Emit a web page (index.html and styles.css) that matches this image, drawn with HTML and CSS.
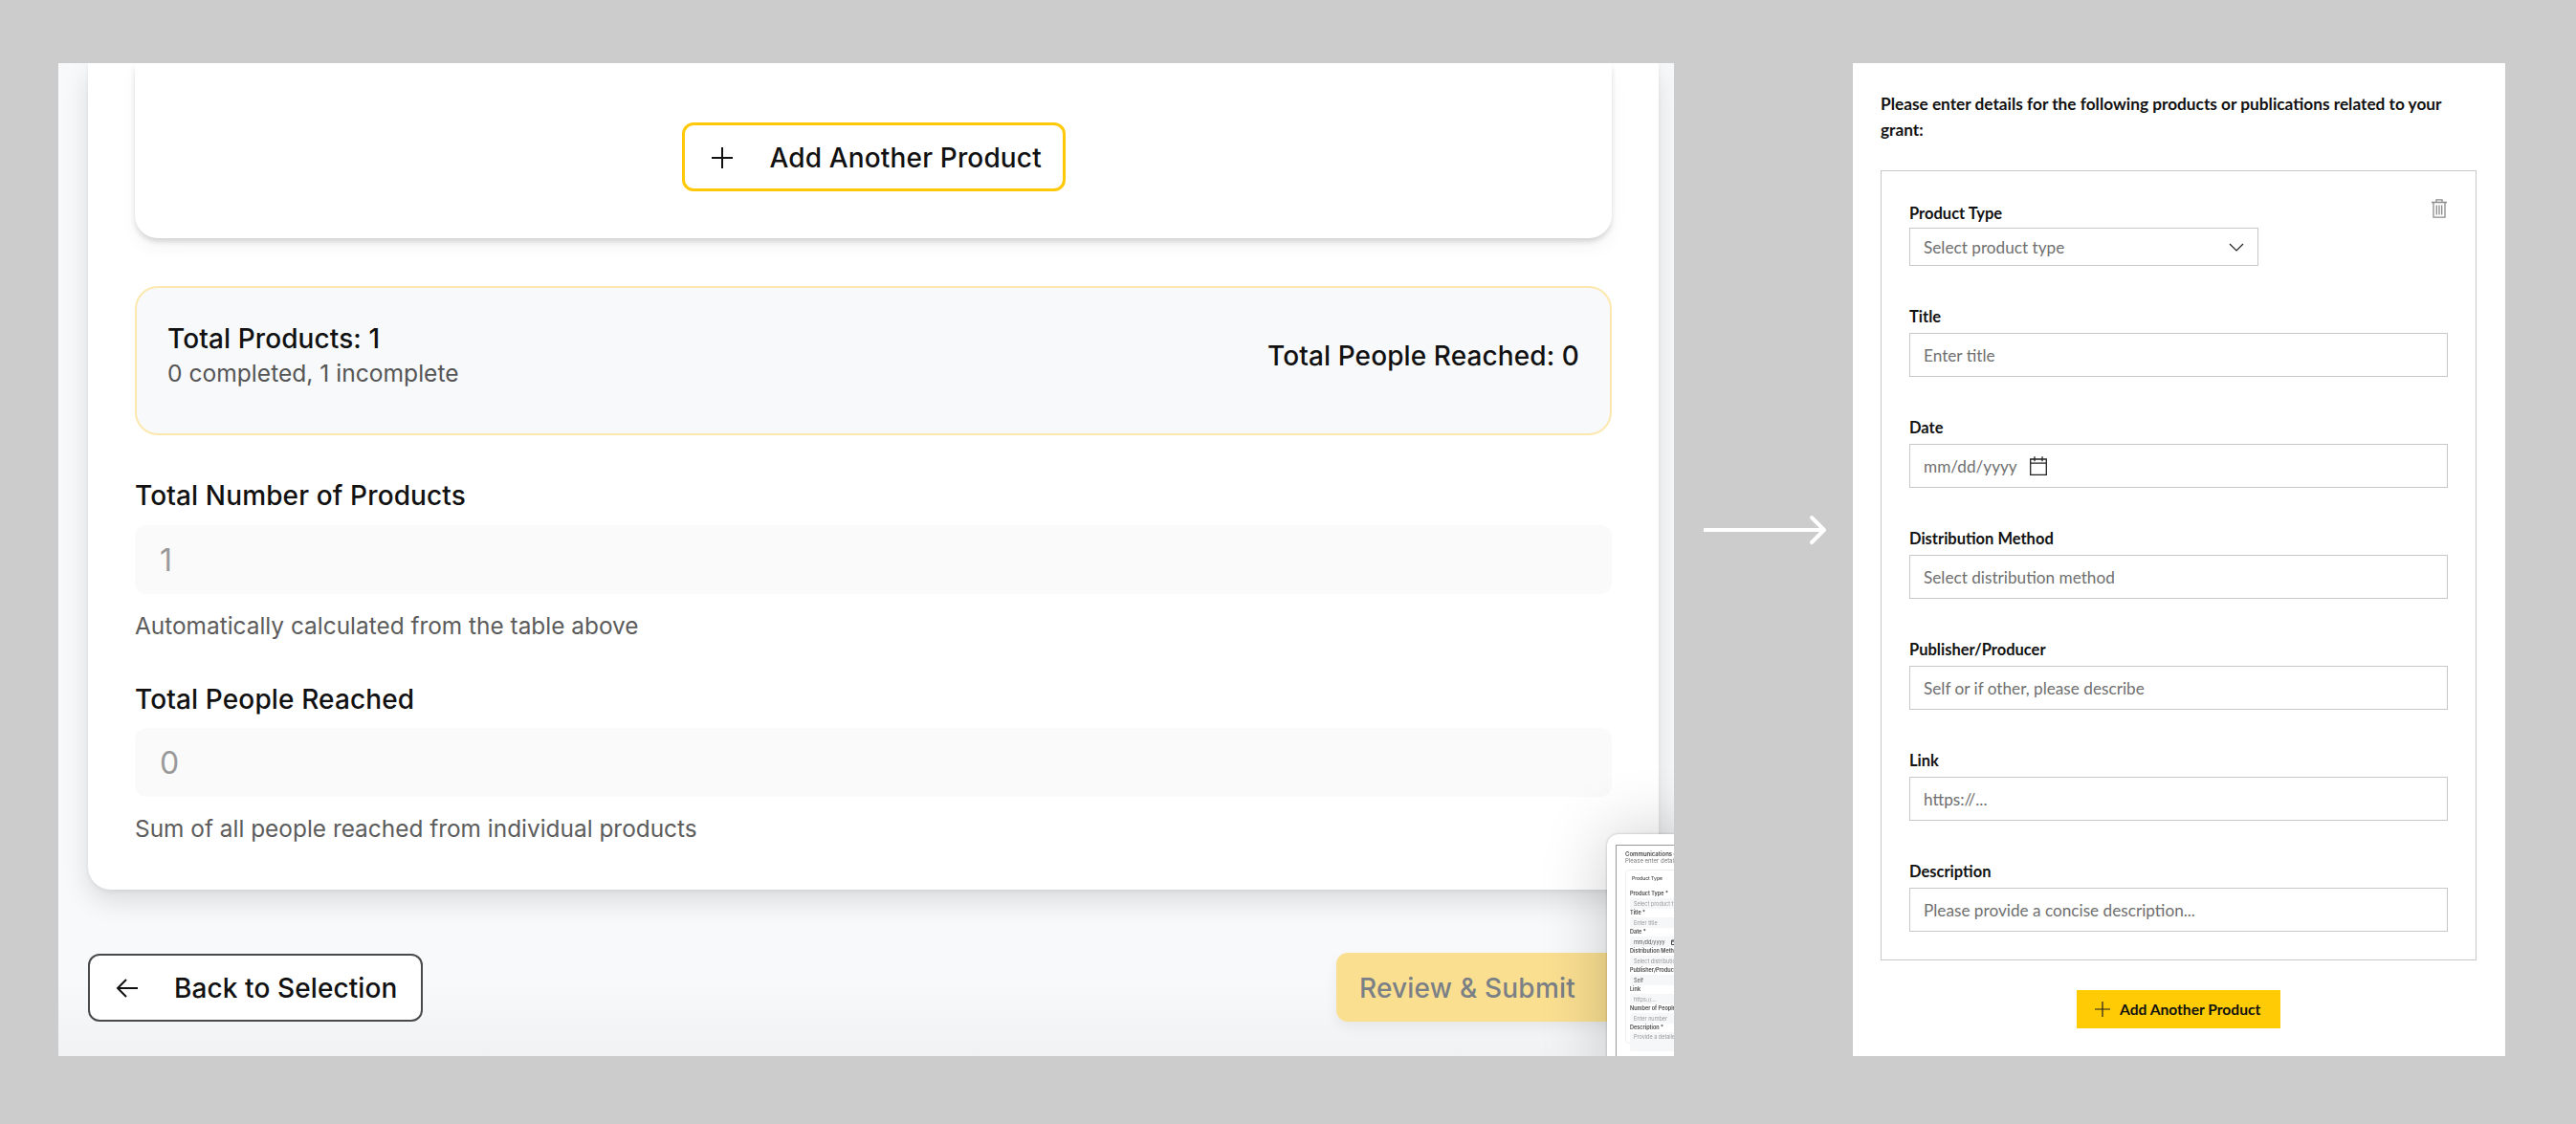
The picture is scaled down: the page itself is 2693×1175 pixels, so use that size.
FILE: index.html
```html
<!DOCTYPE html>
<html lang="en">
<head>
<meta charset="utf-8">
<title>Product form before and after</title>
<link rel="stylesheet" href="styles.css">
</head>
<body>
<main class="stage">
  <section class="before">
    <div class="main-card">
      <div class="products-card">
        <button class="add-outline">
          <svg class="ico-plus" viewBox="0 0 24 24" width="24" height="24"><path d="M12 1v22M1 12h22" fill="none" stroke="#111" stroke-width="2"/></svg>
          <span>Add Another Product</span>
        </button>
      </div>
      <div class="summary">
        <div>
          <div class="summary-title">Total Products: 1</div>
          <div class="summary-sub">0 completed, 1 incomplete</div>
        </div>
        <div class="summary-title">Total People Reached: 0</div>
      </div>
      <div class="calc first">
        <div class="calc-label">Total Number of Products</div>
        <div class="calc-input">1</div>
        <div class="calc-help">Automatically calculated from the table above</div>
      </div>
      <div class="calc second">
        <div class="calc-label">Total People Reached</div>
        <div class="calc-input">0</div>
        <div class="calc-help">Sum of all people reached from individual products</div>
      </div>
    </div>
    <div class="nav-row">
      <button class="back">
        <svg viewBox="0 0 24 24" width="24" height="24"><path d="M23 12H2M11 3l-9 9 9 9" fill="none" stroke="#111" stroke-width="2"/></svg>
        <span>Back to Selection</span>
      </button>
      <button class="submit">Review &amp; Submit</button>
    </div>
    <aside class="thumb">
      <div class="thumb-frame">
        <div class="thumb-title">Communications or Media Products</div>
        <div class="thumb-sub">Please enter details for the following products</div>
        <div class="thumb-card">
          <div class="thumb-tag">Product Type</div>
          <div class="thumb-field"><div class="thumb-label">Product Type *</div><div class="thumb-input">Select product type</div></div>
          <div class="thumb-field"><div class="thumb-label">Title *</div><div class="thumb-input">Enter title</div></div>
          <div class="thumb-field"><div class="thumb-label">Date *</div><div class="thumb-input dark">mm/dd/yyyy<svg class="thumb-cal" viewBox="0 0 6 6" width="6" height="6"><path d="M.5 1h5v4.5h-5zM.5 2h5" fill="none" stroke="#444"/></svg></div></div>
          <div class="thumb-field"><div class="thumb-label">Distribution Method</div><div class="thumb-input">Select distribution method</div></div>
          <div class="thumb-field"><div class="thumb-label">Publisher/Producer</div><div class="thumb-input dark">Self</div></div>
          <div class="thumb-field"><div class="thumb-label">Link</div><div class="thumb-input">https://...</div></div>
          <div class="thumb-field"><div class="thumb-label">Number of People Reached</div><div class="thumb-input">Enter number</div></div>
          <div class="thumb-field"><div class="thumb-label">Description *</div><div class="thumb-input tall">Provide a detailed description</div></div>
        </div>
      </div>
    </aside>
  </section>

  <div class="arrow">
    <svg viewBox="0 0 130 32" width="130" height="32"><path d="M0 16H126" fill="none" stroke="#fff" stroke-width="4"/><path d="M113 3l13 13-13 13" fill="none" stroke="#fff" stroke-width="4" stroke-linecap="round" stroke-linejoin="round"/></svg>
  </div>

  <section class="after">
    <p class="intro">Please enter details for the following products or publications related to your grant:</p>
    <div class="form-box">
      <svg class="trash" viewBox="0 0 16 20" width="16" height="20"><path d="M0 3.5h16M5 3V.8h6V3M2 3.5v15.7h12V3.5M5.3 6.5v10M8 6.5v10M10.7 6.5v10" fill="none" stroke="#8a8a8a" stroke-width="1.3"/></svg>
      <div class="field">
        <div class="label">Product Type</div>
        <div class="input select"><span>Select product type</span><svg viewBox="0 0 16 9" width="16" height="9"><path d="M1 1l7 7 7-7" fill="none" stroke="#222" stroke-width="1.2"/></svg></div>
      </div>
      <div class="field">
        <div class="label">Title</div>
        <div class="input"><span>Enter title</span></div>
      </div>
      <div class="field">
        <div class="label">Date</div>
        <div class="input"><span>mm/dd/yyyy</span><svg class="cal" viewBox="0 0 18 20" width="18" height="20"><path d="M.7 3h16.6v16.3H.7zM.7 7.2h16.6M5 .3v5M13 .3v5" fill="none" stroke="#222" stroke-width="1.3"/></svg></div>
      </div>
      <div class="field">
        <div class="label">Distribution Method</div>
        <div class="input"><span>Select distribution method</span></div>
      </div>
      <div class="field">
        <div class="label">Publisher/Producer</div>
        <div class="input"><span>Self or if other, please describe</span></div>
      </div>
      <div class="field">
        <div class="label">Link</div>
        <div class="input"><span>https://...</span></div>
      </div>
      <div class="field">
        <div class="label">Description</div>
        <div class="input"><span>Please provide a concise description...</span></div>
      </div>
    </div>
    <div class="add-row">
      <button class="add-solid">
        <svg viewBox="0 0 16 16" width="16" height="16"><path d="M8 0v16M0 8h16" fill="none" stroke="#222" stroke-width="1.2"/></svg>
        <span>Add Another Product</span>
      </button>
    </div>
  </section>
</main>
</body>
</html>
```

FILE: styles.css
```css
* { box-sizing: border-box; }
html, body { margin: 0; height: 100%; }
body { background: #cccccc; overflow: hidden; }
button { font: inherit; cursor: pointer; }

.stage {
  display: flex;
  align-items: flex-start;
  padding: 66px 0 0 61px;
  height: 1175px;
}

/* Before panel */
.before {
  position: relative;
  flex: none;
  width: 1689px;
  height: 1038px;
  padding-left: 31px;
  padding-right: 16px;
  overflow: hidden;
  font-family: Inter, "Liberation Sans", sans-serif;
  color: #111;
  background: linear-gradient(to bottom, #f8f9fb 0, #f8f9fb 92%, #f1f2f3 100%);
}
.main-card {
  background: #fff;
  height: 864px;
  padding: 0 49px;
  border-radius: 0 0 24px 24px;
  box-shadow: 0 12px 28px rgba(0, 0, 0, .12), 0 2px 4px rgba(0, 0, 0, .06);
}
.products-card {
  height: 183px;
  display: flex;
  justify-content: center;
  padding-top: 62px;
  background: #fff;
  border-radius: 0 0 24px 24px;
  box-shadow: 0 4px 6px -1px rgba(0, 0, 0, .17), 0 10px 20px rgba(0, 0, 0, .04);
}
.add-outline {
  width: 401px;
  height: 72px;
  display: flex;
  align-items: center;
  gap: 38px;
  padding: 1px 0 0 27px;
  background: #fff;
  border: 3px solid #ffc907;
  border-radius: 12px;
  font-size: 28px;
  font-weight: 500;
  letter-spacing: .15px;
  color: #111;
}
.summary {
  margin-top: 50px;
  height: 156px;
  display: flex;
  justify-content: space-between;
  align-items: center;
  padding: 0 32px 11px;
  background: #f8f9fb;
  border: 2px solid #fce8ae;
  border-radius: 24px;
}
.summary-title { font-size: 28px; font-weight: 500; line-height: 36px; letter-spacing: .1px; }
.summary-sub { font-size: 24.6px; line-height: 36px; color: #555; }
.calc.first { margin-top: 46px; }
.calc.second { margin-top: 43px; }
.calc-label { font-size: 28px; font-weight: 500; line-height: 34px; letter-spacing: .13px; }
.calc-input {
  margin-top: 14px;
  height: 72px;
  display: flex;
  align-items: center;
  padding-left: 26px;
  background: #fafafa;
  border-radius: 12px;
  font-size: 32px;
  color: #999;
}
.calc.second .calc-input { margin-top: 13px; }
.calc-help { margin-top: 16px; font-size: 24.4px; line-height: 34px; color: #5c5c5c; }

.nav-row {
  display: flex;
  justify-content: space-between;
  align-items: center;
  margin-top: 66px;
  margin-right: -16px;
}
.back {
  width: 350px;
  height: 71px;
  display: flex;
  align-items: center;
  gap: 37px;
  padding: 2px 0 0 27px;
  background: #fff;
  border: 2px solid #4a4a4a;
  border-radius: 12px;
  font-size: 28px;
  font-weight: 500;
  letter-spacing: .1px;
  color: #111;
}
.submit {
  width: 353px;
  height: 72px;
  padding: 2px 0 0 24px;
  text-align: left;
  background: #fadf91;
  border: none;
  border-radius: 12px;
  font-size: 28px;
  font-weight: 500;
  letter-spacing: .2px;
  color: #7b7f86;
  box-shadow: 0 6px 14px rgba(0, 0, 0, .06);
}
.thumb {
  position: absolute;
  left: 1619px;
  top: 806px;
  width: 140px;
  height: 260px;
  padding: 11px 0 0 9px;
  background: #fff;
  border-radius: 12px 0 0 0;
  box-shadow: 0 0 70px rgba(0, 0, 0, .2), 0 0 3px rgba(0, 0, 0, .25);
  filter: blur(.4px);
}
.thumb-frame {
  height: 300px;
  padding: 5px 0 0 9px;
  border-left: 1px solid #999;
  border-top: 1px solid #999;
  white-space: nowrap;
  overflow: hidden;
  font-family: Inter, "Liberation Sans", sans-serif;
}
.thumb-title { font-size: 6px; line-height: 7px; font-weight: 600; color: #444; }
.thumb-sub { font-size: 6px; line-height: 7px; color: #777; }
.thumb-card {
  margin-top: 6px;
  padding: 5px 0 0 4px;
  border: 1px solid #eee;
  border-radius: 4px;
}
.thumb-tag { font-size: 5px; line-height: 7px; padding: 0 2px; margin-bottom: 8px; font-weight: 500; color: #444; }
.thumb-field { height: 20px; }
.thumb-label { font-size: 5.5px; line-height: 8px; font-weight: 600; color: #444; }
.thumb-input {
  height: 11px;
  margin-top: 1px;
  padding-left: 4px;
  display: flex;
  align-items: center;
  gap: 6px;
  background: #f6f7f8;
  border-radius: 2px;
  font-size: 5.5px;
  color: #999;
}
.thumb-input.dark { color: #555; }
.thumb-input.tall { height: 20px; align-items: flex-start; padding-top: 2px; }
.thumb-cal { flex: none; }

/* Arrow */
.arrow {
  flex: none;
  width: 187px;
  padding: 472px 0 0 31px;
  line-height: 0;
}

/* After panel */
.after {
  flex: none;
  width: 682px;
  height: 1038px;
  padding: 29px 30px 0 29px;
  background: #fff;
  font-family: Lato, "Open Sans", sans-serif;
  color: #111;
}
.intro {
  margin: 0;
  font-size: 17.25px;
  font-weight: 700;
  line-height: 27px;
  width: 600px;
  color: #111;
}
.form-box {
  position: relative;
  margin-top: 29px;
  height: 826px;
  padding: 34px 29px 0 29px;
  border: 1.5px solid #c8c8c8;
}
.trash { position: absolute; right: 30px; top: 29px; }
.field + .field { margin-top: 43px; }
.label { font-size: 16.5px; font-weight: 700; line-height: 20px; color: #111; }
.input {
  margin-top: 7px;
  height: 46px;
  display: flex;
  align-items: center;
  gap: 13px;
  padding: 0 14px;
  border: 1.5px solid #c8c8c8;
  font-size: 17.2px;
  color: #6f6f6f;
}
.select {
  margin-top: 5px;
  width: 365px;
  height: 40px;
  justify-content: space-between;
}
.add-row { display: flex; justify-content: center; margin-top: 31px; }
.add-solid {
  width: 213px;
  height: 40px;
  display: flex;
  align-items: center;
  gap: 10px;
  padding: 0 0 0 19px;
  background: #ffcb05;
  border: none;
  font-family: Lato, "Open Sans", sans-serif;
  font-size: 15.6px;
  font-weight: 700;
  color: #111;
}
```
